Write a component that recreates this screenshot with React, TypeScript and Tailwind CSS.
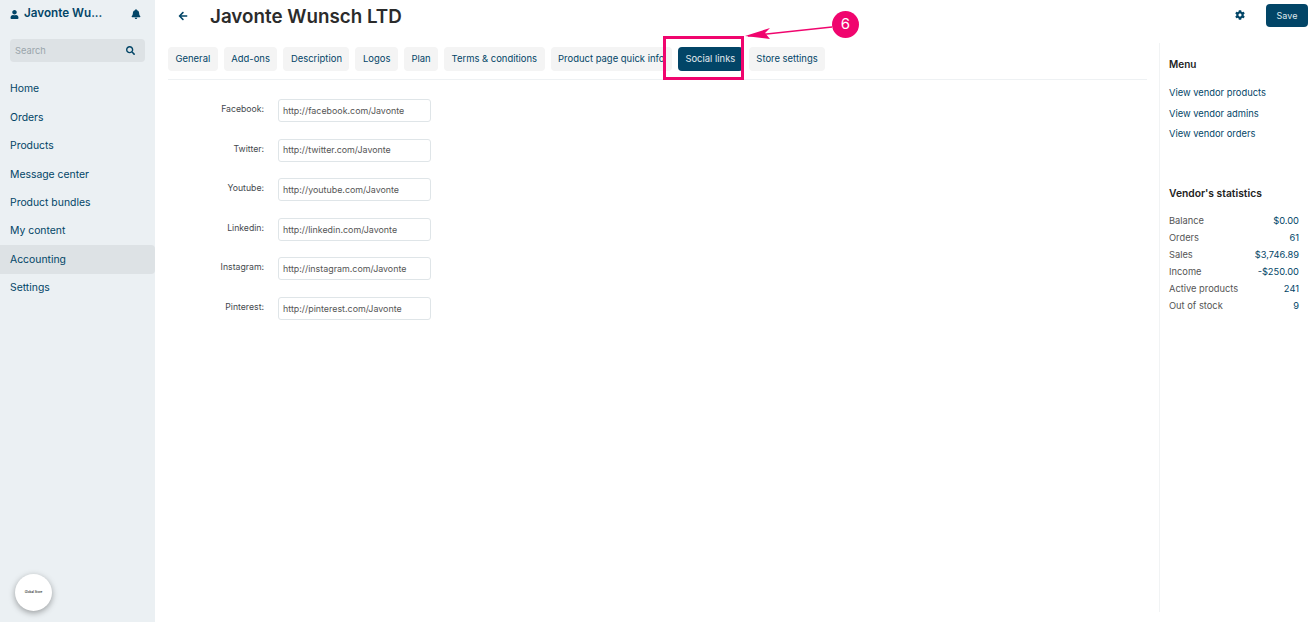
import { FaArrowLeft, FaBell, FaCog, FaSearch, FaUser } from "react-icons/fa"

const navItems = ["Home", "Orders", "Products", "Message center", "Product bundles", "My content", "Accounting", "Settings"]
const tabs = ["General", "Add-ons", "Description", "Logos", "Plan", "Terms & conditions", "Product page quick info", "Social links", "Store settings"]
const socialLinks = [
  ["Facebook:", "http://facebook.com/Javonte"],
  ["Twitter:", "http://twitter.com/Javonte"],
  ["Youtube:", "http://youtube.com/Javonte"],
  ["Linkedin:", "http://linkedin.com/Javonte"],
  ["Instagram:", "http://instagram.com/Javonte"],
  ["Pinterest:", "http://pinterest.com/Javonte"],
]
const menuLinks = ["View vendor products", "View vendor admins", "View vendor orders"]
const stats = [
  ["Balance", "$0.00"],
  ["Orders", "61"],
  ["Sales", "$3,746.89"],
  ["Income", "-$250.00"],
  ["Active products", "241"],
  ["Out of stock", "9"],
]

export default function App() {
  return (
    <div className="relative flex h-[622px] w-[1315px] overflow-hidden bg-white font-['Inter',sans-serif] text-[#024567]">
      {/* Sidebar */}
      <aside className="relative flex w-[155px] shrink-0 flex-col bg-[#ebf0f3]">
        <div className="flex h-[28px] items-center pl-[10px] pr-[14px]">
          <FaUser className="h-[9px] w-[9px]" />
          <span className="ml-[5px] text-[11.7px] font-semibold">Javonte Wu...</span>
          <FaBell className="ml-auto h-[10px] w-[10px]" />
        </div>
        <div className="mx-[10px] mt-[11px] flex h-[23px] items-center justify-between rounded-[4px] bg-[#dde2e5] pl-[5px] pr-[10px]">
          <span className="text-[9.3px] text-[#9aa5ab]">Search</span>
          <FaSearch className="h-[9px] w-[9px]" />
        </div>
        <nav className="mt-[13px] flex flex-col">
          {navItems.map((item) => (
            <div
              key={item}
              className={`flex h-[28.4px] items-center pl-[10px] text-[10.4px] ${item === "Accounting" ? "rounded-r-[4px] bg-[#dde2e5]" : ""}`}
            >
              {item}
            </div>
          ))}
        </nav>
        <div className="absolute left-[15px] top-[574px] flex h-[37px] w-[37px] items-center justify-center rounded-full bg-white shadow-[0_2px_6px_rgba(0,0,0,0.35)]">
          <span className="text-[3px] font-semibold text-[#333]">Global Store</span>
        </div>
      </aside>

      {/* Main */}
      <div className="flex min-w-0 flex-1 flex-col">
        <header className="flex h-[43px] shrink-0 items-start">
          <FaArrowLeft className="ml-[23px] mt-[11px] h-[10px] w-[10px]" />
          <h1 className="ml-[22px] mt-[4px] text-[18.8px] font-semibold leading-[26px] text-[#2b2b2b]">Javonte Wunsch LTD</h1>
          <FaCog className="ml-auto mt-[10px] h-[10px] w-[10px]" />
          <button className="ml-[21px] mr-[7px] mt-[4px] h-[23px] w-[42px] rounded-[4px] bg-[#024567] text-[9px] text-[#dfe8ec]">Save</button>
        </header>

        <div className="flex min-h-0 flex-1">
          <main className="w-[992px] shrink-0 pl-[13px]">
            <div className="flex h-[37px] gap-[6px] border-b border-[#eef1f3] pt-[4px]">
              {tabs.map((tab) => (
                <div
                  key={tab}
                  className={`flex h-[24px] items-center rounded-[4px] px-[7.5px] text-[9.45px] ${tab === "Social links" ? "bg-[#024567] text-[#e3ebef]" : "bg-[#f4f4f4]"}`}
                >
                  {tab}
                </div>
              ))}
            </div>
            <div className="mt-[19px] flex flex-col gap-[16.6px]">
              {socialLinks.map(([label, value]) => (
                <div key={label} className="flex h-[23px] items-center">
                  <label className="w-[96px] pb-[2px] text-right text-[8.7px] text-[#44494d]">{label}</label>
                  <div className="ml-[14px] flex h-[23px] w-[153px] items-center rounded-[3px] border border-[#dfe5e8] pl-[4px] text-[8.9px] text-[#555]">
                    {value}
                  </div>
                </div>
              ))}
            </div>
          </main>

          <aside className="mb-[10px] ml-[12px] flex-1 border-l border-[#f1f3f4] pl-[9px] pr-[16px]">
            <h3 className="mt-[14px] text-[10px] font-semibold leading-[14px] text-[#222]">Menu</h3>
            <div className="mt-[15px] flex flex-col gap-[7.5px]">
              {menuLinks.map((link) => (
                <a key={link} className="text-[9.35px] leading-[13px]">{link}</a>
              ))}
            </div>
            <h3 className="mt-[46px] text-[10.3px] font-semibold leading-[14px] text-[#222]">Vendor's statistics</h3>
            <div className="mt-[12px] flex flex-col">
              {stats.map(([label, value]) => (
                <div key={label} className="flex h-[17px] items-center justify-between text-[9.3px]">
                  <span className="text-[#555]">{label}</span>
                  <span>{value}</span>
                </div>
              ))}
            </div>
          </aside>
        </div>
      </div>

      {/* Annotation */}
      <div className="absolute left-[663px] top-[36px] h-[44px] w-[81px] border-[3px] border-[#f0056e]" />
      <svg className="absolute left-[740px] top-[20px]" width="95" height="25" viewBox="0 0 95 25">
        <path d="M8 16 L92 7" stroke="#f0056e" strokeWidth="1.6" fill="none" />
        <path d="M5 16 L30 8 L25 13 L30 19 Z" fill="#f0056e" />
      </svg>
      <div className="absolute left-[832px] top-[11px] flex h-[27px] w-[27px] items-center justify-center rounded-full bg-[#f0056e] text-[15px] text-white">6</div>
    </div>
  )
}
